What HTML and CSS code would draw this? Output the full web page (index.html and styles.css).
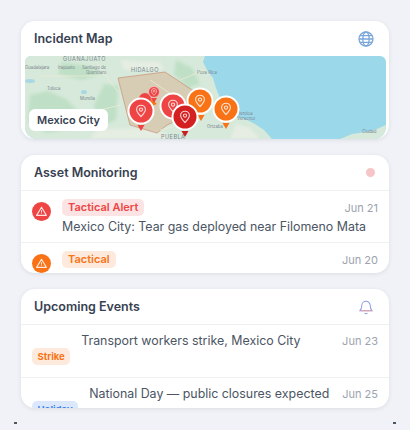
FILE: index.html
```html
<!DOCTYPE html>
<html>

	<head>
		<meta charset="UTF-8">
		<title>Dashboard</title>
		<link rel="stylesheet" href="styles.css">
	</head>

	<body>
		<div class="wrap">
			<div class="card card-map">
				<div class="card-head">
					<h2>Incident Map</h2>
					<svg class="head-icon" viewBox="0 0 16 16" fill="none" stroke="#7aa7d9" stroke-width="1.3">
						<circle cx="8" cy="8" r="7" />
						<ellipse cx="8" cy="8" rx="3.2" ry="7" />
						<path d="M1 8h14M2 4.600h12M2 11.400h12" />
					</svg>
				</div>
				<div class="map">
					<svg class="map-draw" viewBox="25 56 361 83">
						<defs>
							<g id="pin-icon" fill="none" stroke="#fff" stroke-width="1.100" opacity="0.8">
								<path d="M0 5.500C-3 2.600-4.400 .6-4.400-1.400a4.400 4.400 0 0 1 8.800 0C4.400 .6 3 2.600 0 5.500z" />
								<circle cx="0" cy="-1.400" r="1.600" />
							</g>
							<filter id="soft">
								<feGaussianBlur stdDeviation="1.800" />
							</filter>
						</defs>
						<rect x="25" y="56" width="361" height="83" fill="#9bd8ea" />
						<path d="M25 56H205L203 62 207 70 213 78 216 88 220 98 223 108 232 116 245 119 255 124 264 130 272 139H25z" fill="#d6e9da" />
						<path d="M340 139L352 134 372 131 386 125V139z" fill="#d6e9da" />
						<g filter="url(#soft)" fill="#bfe0c6">
							<path d="M30 95l18-4 18 8 14 14-8 16-26 4-18-12z" />
							<path d="M62 62l26 4 14 8-20 6-24-6z" />
							<path d="M176 60l16 8 8 16-12 4-14-14z" />
							<path d="M104 84l14 2-2 34-14 6-8-20z" />
						</g>
						<g filter="url(#soft)" fill="#e6ede2">
							<path d="M96 130l40-2 30 5 4 6H90z" />
							<path d="M236 124l14 4 10 11h-30z" />
							<path d="M120 60l40 2 4 8-40 0z" />
						</g>
						<ellipse cx="84" cy="92" rx="3" ry="2" fill="#a9d8e4" />
						<ellipse cx="30" cy="81" rx="5" ry="2" fill="#a9d8e4" />
						<path d="M118 78L165 72 197 93 196 112 167 125 157 133 130 125z" fill="#d9a27d" fill-opacity="0.4" stroke="#cc8f72" stroke-width="0.7" />
						<path d="M40 76h60M96 62l22 30M150 80l30 20M205 70l-25 10M60 120l60-15M160 130l40-10" stroke="#f4ecd4" stroke-width="0.7" fill="none" />
						<text class="map-label" x="63" y="61">GUANAJUATO</text>
						<text class="map-label" x="131" y="72">HIDALGO</text>
						<text class="map-label" x="161" y="138.500">PUEBLA</text>
						<text class="map-town" x="25" y="69">Guadalajara</text>
						<text class="map-town" x="58" y="69">Irapuato</text>
						<text class="map-town" x="82" y="69">Santiago de</text>
						<text class="map-town" x="86" y="73.500">Querétaro</text>
						<text class="map-town" x="47" y="90">Toluca</text>
						<text class="map-town" x="80" y="100">Morelia</text>
						<text class="map-town" x="197" y="74">Poza Rica</text>
						<text class="map-town" x="237" y="115">Heroica</text>
						<text class="map-town" x="237" y="120">Veracruz</text>
						<text class="map-town" x="207" y="128">Orizaba</text>
						<text class="map-town" x="362" y="133">Ciudad</text>
						<path d="M145 108l-3 6-3-6z" fill="#f97316" />
						<circle cx="145" cy="99" r="6" fill="#ef4444" />
						<path d="M151 99l6 5-8 3z" fill="#f97316" />
						<g>
							<path d="M154 103l-3-5h6z" fill="#ef4444" />
							<circle cx="154" cy="92" r="5.500" fill="#ef4444" stroke="#f5c6c6" stroke-width="0.8" />
							<use href="#pin-icon" transform="translate(154 92) scale(0.6)" />
						</g>
						<g>
							<path d="M141 131l-3.500-6h7z" fill="#ef4444" />
							<circle cx="141" cy="111" r="12.500" fill="#ef4444" stroke="#fff" stroke-width="2" />
							<use href="#pin-icon" transform="translate(141 111)" />
						</g>
						<g>
							<circle cx="173" cy="106" r="12.500" fill="#ef4444" stroke="#fff" stroke-width="2" />
							<use href="#pin-icon" transform="translate(173 106)" />
						</g>
						<g>
							<path d="M201 121l-3.500-6h7z" fill="#f97316" />
							<circle cx="200" cy="101" r="12.500" fill="#f97316" stroke="#fff" stroke-width="2" />
							<use href="#pin-icon" transform="translate(200 101)" />
						</g>
						<g>
							<path d="M185 137l-3.500-6h7z" fill="#c81e1e" />
							<circle cx="185" cy="117" r="12.500" fill="#d42020" stroke="#fff" stroke-width="2" />
							<use href="#pin-icon" transform="translate(185 117)" />
						</g>
						<g>
							<path d="M226 129l-3.500-6h7z" fill="#f97316" />
							<circle cx="226" cy="109" r="12.500" fill="#f97316" stroke="#fff" stroke-width="2" />
							<use href="#pin-icon" transform="translate(226 109)" />
						</g>
					</svg>
					<div class="map-tag">Mexico City</div>
				</div>
			</div>

			<div class="card">
				<div class="card-head">
					<h2>Asset Monitoring</h2>
					<span class="live-dot"></span>
				</div>
				<div class="row row-alert">
					<svg class="alert-icon red" viewBox="0 0 19 19">
						<path d="M9.500 5.200L14.400 13.400H4.600z" fill="none" stroke="#fff" stroke-opacity="0.85" stroke-width="1.100" stroke-linejoin="round" />
						<path d="M9.500 8.200v2.400M9.500 11.400v.6" stroke="#fff" stroke-opacity="0.85" stroke-width="1" />
					</svg>
					<div class="row-main">
						<div class="row-top">
							<span class="badge badge-red">Tactical Alert</span>
							<span class="date">Jun 21</span>
						</div>
						<p class="row-text">Mexico City: Tear gas deployed near Filomeno Mata</p>
					</div>
				</div>
				<div class="row row-alert">
					<svg class="alert-icon orange" viewBox="0 0 19 19">
						<path d="M9.500 5.200L14.400 13.400H4.600z" fill="none" stroke="#fff" stroke-opacity="0.85" stroke-width="1.100" stroke-linejoin="round" />
						<path d="M9.500 8.200v2.400M9.500 11.400v.6" stroke="#fff" stroke-opacity="0.85" stroke-width="1" />
					</svg>
					<div class="row-main">
						<div class="row-top">
							<span class="badge badge-orange">Tactical</span>
							<span class="date">Jun 20</span>
						</div>
					</div>
				</div>
			</div>

			<div class="card card-events">
				<div class="card-head">
					<h2>Upcoming Events</h2>
					<svg class="head-icon bell" viewBox="0 0 16 17" fill="none" stroke-width="1.100">
						<path d="M1.500 12.500c1.200-1.200 2-2 2-5.500a4.500 4.500 0 0 1 9 0c0 3.500 .8 4.300 2 5.500z" stroke="#8f9fe0" />
						<path d="M6.500 15c.8 .7 2.200 .7 3 0" stroke="#8f9fe0" />
						<path d="M2 12.500h12" stroke="#e8a0a0" />
					</svg>
				</div>
				<div class="row row-event">
					<span class="badge badge-small badge-orange">Strike</span>
					<p class="event-text">Transport workers strike, Mexico City</p>
					<span class="date">Jun 23</span>
				</div>
				<div class="row row-event">
					<span class="badge badge-small badge-blue">Holiday</span>
					<p class="event-text">National Day — public closures expected</p>
					<span class="date">Jun 25</span>
				</div>
			</div>
		</div>
		<span class="corner-mark mark-left"></span>
		<span class="corner-mark mark-right"></span>
	</body>

</html>
```

FILE: styles.css
```css
* {
	margin: 0;
	padding: 0;
	box-sizing: border-box;
}

html,
body {
	height: 100%;
	overflow: hidden;
}

body {
	position: relative;
	background: #f0f2f7;
	font-family: Inter, "Liberation Sans", sans-serif;
}

.wrap {
	display: flex;
	flex-direction: column;
	gap: 16px;
	padding: 21px 21px 0;
}

.card {
	height: 118px;
	background: #fff;
	border-radius: 14px;
	box-shadow: 0 1px 4px rgba(30, 41, 59, 0.1);
	overflow: hidden;
}

.card-events {
	height: 119px;
}

.card-head {
	display: flex;
	justify-content: space-between;
	align-items: center;
	height: 35px;
	padding: 0 15px 0 13px;
}

.card-head h2 {
	font-size: 12.500px;
	font-weight: 600;
	color: #374151;
}

.head-icon {
	width: 16px;
	height: 16px;
}

.map {
	position: relative;
	height: 83px;
	margin: 0 3px 0 4px;
	border-radius: 6px 6px 12px 12px;
	overflow: hidden;
}

.map-draw {
	display: block;
	width: 100%;
	height: 100%;
}

.map-label {
	font-size: 5.500px;
	letter-spacing: 0.500px;
	fill: #7b8590;
}

.map-town {
	font-size: 4.300px;
	fill: #7b8590;
}

.map-tag {
	position: absolute;
	left: 4px;
	bottom: 8px;
	padding: 4px 8px;
	background: #fff;
	border-radius: 6px;
	font-size: 11px;
	line-height: 14px;
	font-weight: 600;
	color: #374151;
}

.live-dot {
	width: 9px;
	height: 9px;
	margin-right: -1px;
	border-radius: 50%;
	background: #f6c6c6;
}

.row {
	border-top: 1px solid #eef0f3;
}

.row-alert {
	display: flex;
	gap: 11px;
	height: 52px;
	padding: 8px 11px 0;
}

.alert-icon {
	flex: none;
	width: 19px;
	height: 19px;
	margin-top: 3px;
	border-radius: 50%;
}

.alert-icon.red {
	background: #ef4444;
}

.alert-icon.orange {
	background: #f97316;
}

.row-main {
	flex: 1;
}

.row-top {
	display: flex;
	justify-content: space-between;
	align-items: center;
}

.badge {
	padding: 1px 6px;
	border-radius: 5px;
	font-size: 11px;
	font-weight: 600;
	line-height: 15px;
}

.badge-small {
	padding: 1px 5.500px;
	font-size: 9.500px;
	font-weight: 700;
}

.badge-red {
	background: #fde4e4;
	color: #ef4444;
}

.badge-orange {
	background: #fdeadd;
	color: #f97316;
}

.badge-blue {
	background: #dbe8fb;
	color: #3b82f6;
}

.date {
	font-size: 11px;
	color: #9ca3af;
}

.row-text {
	margin-top: 3px;
	font-size: 12.400px;
	color: #4b5563;
}

.row-event {
	display: flex;
	align-items: flex-start;
	gap: 11px;
	height: 53px;
	padding: 8px 11px 0;
}

.row-event .badge {
	flex: none;
	margin-top: 15px;
}

.event-text {
	flex: 1;
	font-size: 12.400px;
	white-space: nowrap;
	color: #4b5563;
}

.row-event .date {
	margin-top: 1px;
}

.corner-mark {
	position: absolute;
	top: 422px;
	width: 3px;
	height: 2px;
	background: #4b5563;
}

.mark-left {
	left: 14px;
}

.mark-right {
	left: 393px;
}
```
